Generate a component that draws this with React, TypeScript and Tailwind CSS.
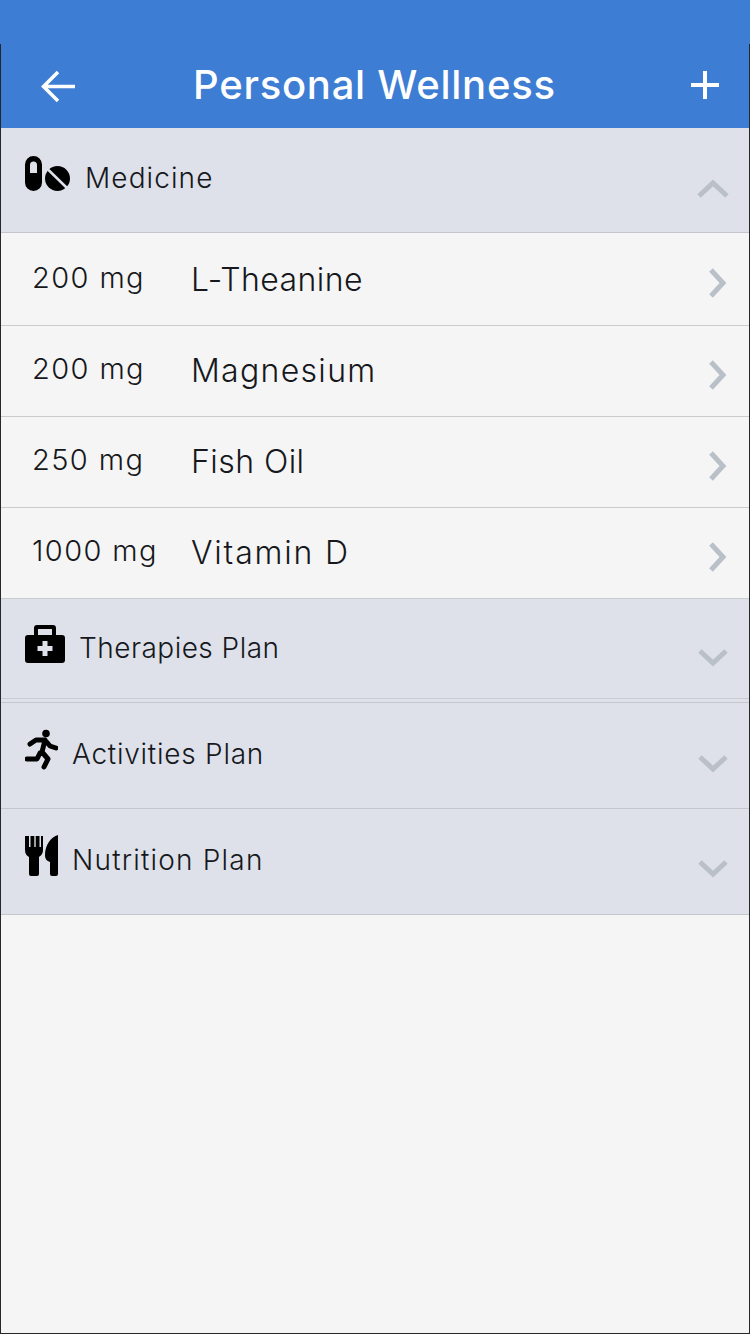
import React from "react";

const font = { fontFamily: 'Inter, "Liberation Sans", sans-serif' };

function Pills() {
  return (
    <svg width="46" height="36" viewBox="0 0 46 36" className="block">
      <path fillRule="evenodd" fill="#000" d="M8.5 0a8.5 8.5 0 0 1 8.500 8.500v18a8.500 8.500 0 0 1-17 0v-18A8.500 8.500 0 0 1 8.500 0ZM5 9v8h7V9a3.500 3.500 0 0 0-7 0Z" />
      <circle cx="32.5" cy="22.5" r="12.5" fill="#000" />
      <path d="M23 13.500 42 32" stroke="#dee1ea" strokeWidth="2.5" />
    </svg>
  );
}

function Kit() {
  return (
    <svg width="40" height="38" viewBox="0 0 40 38" className="block">
      <path fillRule="evenodd" fill="#000" d="M12 0h16a3 3 0 0 1 3 3v7h6a3 3 0 0 1 3 3v22a3 3 0 0 1-3 3H3a3 3 0 0 1-3-3V13a3 3 0 0 1 3-3h6V3a3 3 0 0 1 3-3Zm1 4v6h14V4ZM17.500 16v5h-5v5h5v5h5v-5h5v-5h-5v-5Z" />
    </svg>
  );
}

function Runner() {
  return (
    <svg width="33" height="41" viewBox="0 0 33 41" className="block">
      <circle cx="21" cy="4.5" r="3.8" fill="#000" />
      <path fill="none" stroke="#000" strokeWidth="5" strokeLinecap="round" strokeLinejoin="round" d="M5 15 11 11 20 11 17 23 23 30 19 38M20 11 25 17 31 19M15 24 12 30 2 30" />
    </svg>
  );
}

function Cutlery() {
  return (
    <svg width="33" height="41" viewBox="0 0 33 41" className="block">
      <path fill="#000" d="M0 1h4v11h1.500V1h3.800v11h1.400V1h3.800v11h1.500V1H18v14c0 4-2.500 6-4 7v17a2 2 0 0 1-2 2H6a2 2 0 0 1-2-2V22c-2-1-4-3-4-7Z" />
      <path fill="#000" d="M33 0v39a2 2 0 0 1-2 2h-4a2 2 0 0 1-2-2V27c-3-1-5-3-5-7C20 10 26 2 33 0Z" />
    </svg>
  );
}

function Chevron({ dir }: { dir: "up" | "down" | "right" }) {
  const d = { up: "M2 18 16 5 30 18", down: "M3 4 16 16 29 4", right: "M4 3 16 16 4 29" }[dir];
  const isRight = dir === "right";
  return (
    <svg width={isRight ? 20 : 32} height={isRight ? 32 : 21} viewBox={isRight ? "0 0 20 32" : "0 0 32 21"} className="block">
      <path d={d} fill="none" stroke="#b9c0c8" strokeWidth="5" />
    </svg>
  );
}

function Section({ icon, label, gap, dir, h, textTop, chevTop, iconTop, tracking, double }: { icon: React.ReactNode; label: string; gap: string; dir: "up" | "down"; h: string; textTop: string; chevTop: string; iconTop: string; tracking: string; double?: boolean }) {
  return (
    <div className={`${h} bg-[#dee1ea] border-b border-[#c3c6cb] flex items-start pl-6 pr-[20px] ${double ? "shadow-[inset_0_-3px_0_#dee1ea,inset_0_-4px_0_#c9ccd3]" : ""}`}>
      <div className={iconTop}>{icon}</div>
      <span className={`${gap} ${textTop} ${tracking} text-[28px] leading-[34px] font-light text-[#16181c]`}>{label}</span>
      <div className={`ml-auto ${chevTop}`}>
        <Chevron dir={dir} />
      </div>
    </div>
  );
}

function Row({ dose, name, h, mt, doseMt, chevTop, tracking }: { dose: string; name: string; h: string; mt: string; doseMt: string; chevTop: string; tracking: string }) {
  return (
    <div className={`${h} border-b border-[#c9cbce] flex items-start pl-[31px] pr-[22px]`}>
      <span className={`w-[159px] ${doseMt} text-[29px] leading-[34px] font-light text-[#16181c] tracking-[1.4px]`}>{dose}</span>
      <span className={`${mt} ${tracking} text-[32px] leading-[38px] font-light text-[#16181c]`}>{name}</span>
      <div className={`ml-auto ${chevTop}`}>
        <Chevron dir="right" />
      </div>
    </div>
  );
}

export default function App() {
  return (
    <div className="w-[750px] h-[1334px] flex flex-col bg-[#3d7dd3]" style={font}>
      <div className="h-[44px] shrink-0" />
      <div className="flex-1 flex flex-col border-x border-b border-[#26272b] bg-[#f5f5f5]">
        <header className="h-[84px] shrink-0 bg-[#3d7dd3] flex items-center pl-[40px] pr-[29px] text-white">
          <svg width="35" height="33" viewBox="0 0 35 33" className="block">
            <path d="M34 16.500H3M17 2 2.500 16.500 17 31" fill="none" stroke="#fff" strokeWidth="3.5" />
          </svg>
          <h1 className="ml-[117px] text-[40px] font-medium tracking-[0.75px] leading-[44px] -mt-[2px]">Personal Wellness</h1>
          <svg width="30" height="30" viewBox="0 0 30 30" className="block ml-auto -mt-[3px]">
            <path d="M15 1v28M1 15h28" fill="none" stroke="#fff" strokeWidth="4" />
          </svg>
        </header>
        <Section icon={<Pills />} label="Medicine" gap="ml-[14px]" dir="up" h="h-[105px]" textTop="mt-[33px]" chevTop="mt-[50px]" iconTop="mt-[28px]" tracking="tracking-[1.1px]" />
        <Row dose="200 mg" name="L-Theanine" h="h-[93px]" mt="mt-[28px]" doseMt="mt-[28px]" chevTop="mt-[34px]" tracking="tracking-[0.4px]" />
        <Row dose="200 mg" name="Magnesium" h="h-[91px]" mt="mt-[26px]" doseMt="mt-[26px]" chevTop="mt-[33px]" tracking="tracking-[1.3px]" />
        <Row dose="250 mg" name="Fish Oil" h="h-[91px]" mt="mt-[26px]" doseMt="mt-[26px]" chevTop="mt-[33px]" tracking="tracking-[0.45px]" />
        <Row dose="1000 mg" name="Vitamin D" h="h-[91px]" mt="mt-[26px]" doseMt="mt-[26px]" chevTop="mt-[33px]" tracking="tracking-[1.8px]" />
        <Section icon={<Kit />} label="Therapies Plan" gap="ml-[14px]" dir="down" h="h-[104px]" textTop="mt-[32px]" chevTop="mt-[48px]" iconTop="mt-[26px]" tracking="tracking-[0.47px]" double />
        <Section icon={<Runner />} label="Activities Plan" gap="ml-[14px]" dir="down" h="h-[106px]" textTop="mt-[34px]" chevTop="mt-[50px]" iconTop="mt-[26px]" tracking="tracking-[0.75px]" />
        <Section icon={<Cutlery />} label="Nutrition Plan" gap="ml-[14px]" dir="down" h="h-[106px]" textTop="mt-[34px]" chevTop="mt-[49px]" iconTop="mt-[26px]" tracking="tracking-[1.2px]" />
      </div>
    </div>
  );
}
